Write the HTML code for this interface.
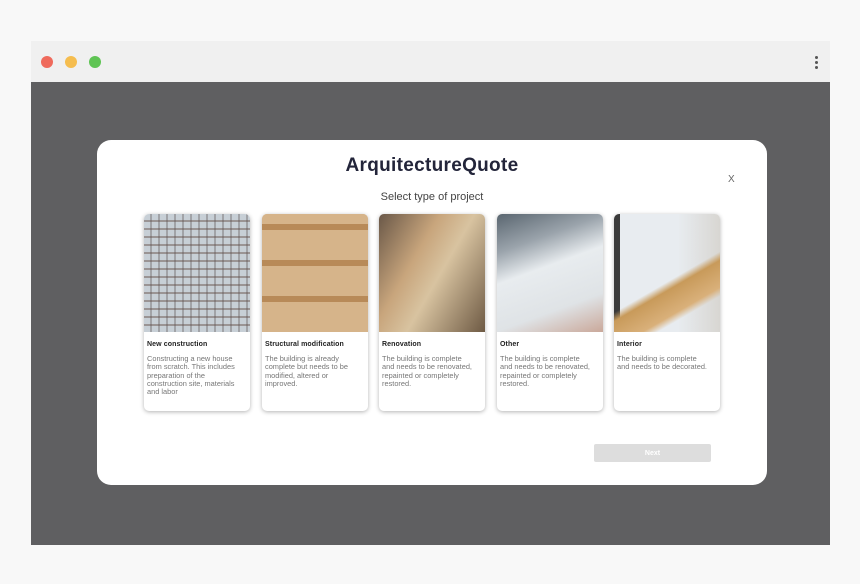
<!DOCTYPE html>
<html><head><style>
*{margin:0;padding:0;box-sizing:border-box}
body{width:860px;height:584px;background:#f8f8f8;position:relative;overflow:hidden;font-family:"Liberation Sans",sans-serif}
.top{position:absolute;left:31px;top:41px;width:799px;height:41px;background:#f0f0f0}
.dot{position:absolute;top:56px;width:12px;height:12px;border-radius:50%}
.menu{position:absolute;left:815px;width:3px;height:3px;border-radius:50%;background:#555}
.dark{position:absolute;left:31px;top:82px;width:799px;height:463px;background:#5f5f61}
.modal{position:absolute;left:97px;top:140px;width:670px;height:345px;background:#fff;border-radius:14px}
h1{position:absolute;left:0;width:100%;top:14px;text-align:center;font-size:19px;font-weight:bold;color:#23253a;letter-spacing:.3px}
.sub{position:absolute;left:0;width:100%;top:51px;text-align:center;font-size:11px;color:#444}
.x{position:absolute;left:631px;top:34px;font-size:10px;color:#666}
.card{position:absolute;top:74px;width:106px;height:197px;background:#fff;border-radius:5px;box-shadow:0 1px 4px rgba(0,0,0,.3);overflow:hidden}
.img{height:118px}
.t{font-size:7px;font-weight:bold;color:#222;margin:9px 3px 0;letter-spacing:.1px}
.d{font-size:7.4px;color:#777;margin:7px 3px 0;line-height:8.3px;width:92px}
.next{position:absolute;left:497px;top:304px;width:117px;height:18px;background:#ddd;border-radius:2px;color:#fff;font-size:7px;font-weight:bold;text-align:center;line-height:19px}
</style></head><body>
<div class="top"></div>
<div class="dot" style="left:41px;background:#ef6a5c"></div>
<div class="dot" style="left:65px;background:#f5bd4f"></div>
<div class="dot" style="left:89px;background:#5fc454"></div>
<div class="menu" style="top:56px"></div><div class="menu" style="top:61px"></div><div class="menu" style="top:66px"></div>
<div class="dark"></div>
<div class="modal">
<h1 style="top:15px">ArquitectureQuote</h1>
<div class="sub" style="top:51px">Select type of project</div>
<div class="x">X</div>
<div class="card" style="left:47px"><div class="img" style="background:repeating-linear-gradient(90deg,transparent 0 6px,rgba(90,80,80,.35) 6px 8px),repeating-linear-gradient(0deg,#c7cfd6 0 6px,#9a9494 6px 8px)"></div><div class="t">New construction</div><div class="d">Constructing a new house from scratch. This includes preparation of the construction site, materials and labor</div></div>
<div class="card" style="left:165px"><div class="img" style="background:repeating-linear-gradient(0deg,#d6b48a 0 30px,#b88a58 30px 36px),#d2ad80"></div><div class="t">Structural modification</div><div class="d">The building is already complete but needs to be modified, altered or improved.</div></div>
<div class="card" style="left:282px"><div class="img" style="background:linear-gradient(120deg,#6a5848 0%,#c8a57c 35%,#d8c3a0 55%,#6e5a44 100%)"></div><div class="t">Renovation</div><div class="d">The building is complete and needs to be renovated, repainted or completely restored.</div></div>
<div class="card" style="left:400px"><div class="img" style="background:linear-gradient(160deg,#5a6670 0%,#9aa3ab 25%,#e8ecef 45%,#dfe3e6 75%,#caa89a 100%)"></div><div class="t">Other</div><div class="d">The building is complete and needs to be renovated, repainted or completely restored.</div></div>
<div class="card" style="left:517px"><div class="img" style="background:linear-gradient(90deg,#3a3a3a 0 6px,#e8ecf0 6px 60%,#d8d6d2 100%)"><div style="height:118px;background:linear-gradient(150deg,transparent 55%,#c89a5a 60%,#d9b07a 75%,transparent 80%)"></div></div><div class="t">Interior</div><div class="d">The building is complete and needs to be decorated.</div></div>
<div class="next">Next</div>
</div>
</body></html>
